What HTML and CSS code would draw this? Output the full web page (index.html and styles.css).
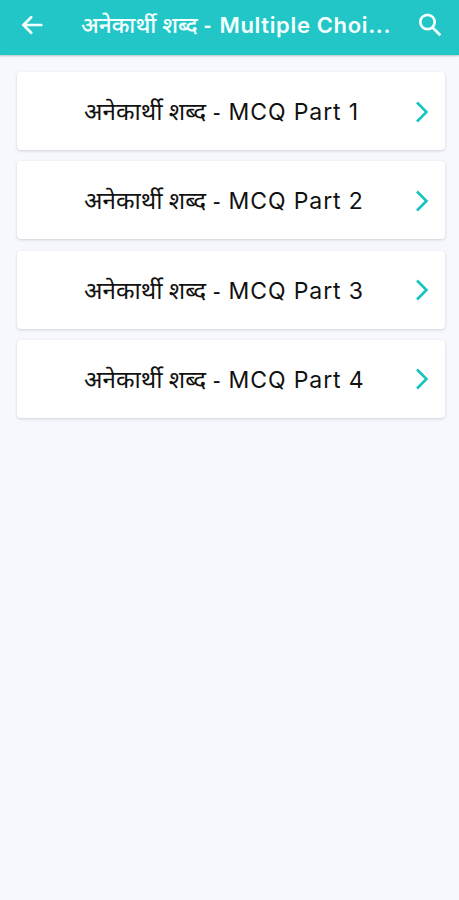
FILE: index.html
```html
<!DOCTYPE html>
<html lang="hi">
<head>
<meta charset="utf-8">
<title>अनेकार्थी शब्द</title>
<link rel="stylesheet" href="styles.css">
</head>
<body>
<header class="bar">
  <svg class="back" viewBox="0 0 24 24"><path d="M21.3 12H3.5M11.2 4.2L3.4 12l7.8 7.8"/></svg>
  <h1 class="title"><span class="hi">अनेकार्थी शब्द</span><span class="dash">-</span><span class="en">Multiple Choi...</span></h1>
  <svg class="search" viewBox="0 0 24 24"><circle cx="9.5" cy="9" r="7.2"/><path d="M14.5 14.5L22.3 22.3"/></svg>
</header>
<main class="list">
  <a class="card"><span class="hi">अनेकार्थी शब्द</span><span class="dash">-</span><span class="en">MCQ Part 1</span><svg class="chev" viewBox="0 0 14 22"><path d="M2 1.5L11.5 11 2 20.5"/></svg></a>
  <a class="card"><span class="hi">अनेकार्थी शब्द</span><span class="dash">-</span><span class="en">MCQ Part 2</span><svg class="chev" viewBox="0 0 14 22"><path d="M2 1.5L11.5 11 2 20.5"/></svg></a>
  <a class="card"><span class="hi">अनेकार्थी शब्द</span><span class="dash">-</span><span class="en">MCQ Part 3</span><svg class="chev" viewBox="0 0 14 22"><path d="M2 1.5L11.5 11 2 20.5"/></svg></a>
  <a class="card"><span class="hi">अनेकार्थी शब्द</span><span class="dash">-</span><span class="en">MCQ Part 4</span><svg class="chev" viewBox="0 0 14 22"><path d="M2 1.5L11.5 11 2 20.5"/></svg></a>
</main>
</body>
</html>
```
FILE: styles.css
```css
* { box-sizing: border-box; }
body {
  margin: 0;
  min-height: 900px;
  background: #f6f8fd;
  font-family: Inter, "Noto Sans", sans-serif;
  color: #111;
}
svg { fill: none; stroke-linecap: butt; }
.bar {
  display: flex;
  align-items: center;
  height: 55px;
  padding: 0 17px 5px 20px;
  background: #23c6c6;
  color: #f4ffff;
  box-shadow: 0 1px 2px rgba(0, 70, 80, .3);
}
.back { width: 24px; height: 24px; stroke: #f4ffff; stroke-width: 2.7; stroke-linecap: round; }
.search { width: 24px; height: 24px; margin-left: auto; stroke: #f4ffff; stroke-width: 2.7; }
.title {
  display: flex;
  align-items: baseline;
  margin: 0 0 2px 37px;
  font-size: 22px;
  font-weight: 600;
  line-height: 40px;
  letter-spacing: .65px;
  white-space: nowrap;
}
.hi { width: 129px; font-family: "Noto Sans", sans-serif; font-size: 24.2px; letter-spacing: 0; }
.dash { width: 15.5px; font-family: "Noto Sans", sans-serif; }
.title .hi { width: 123px; font-size: 22.5px; font-weight: 500; }
.list { display: flex; flex-direction: column; gap: 11.3px; padding: 17px 14px 0 17px; }
.card {
  display: flex;
  align-items: baseline;
  height: 78px;
  padding: 19px 16px 0 67px;
  background: #fff;
  border-radius: 4px;
  box-shadow: 0 1px 3px rgba(30, 35, 50, .18);
  font-size: 23px;
  line-height: 40px;
  letter-spacing: .9px;
  white-space: nowrap;
}
.chev { align-self: flex-start; width: 14px; height: 22px; margin: 9.5px 0 0 auto; stroke: #16c5c0; stroke-width: 2.6; }
```
